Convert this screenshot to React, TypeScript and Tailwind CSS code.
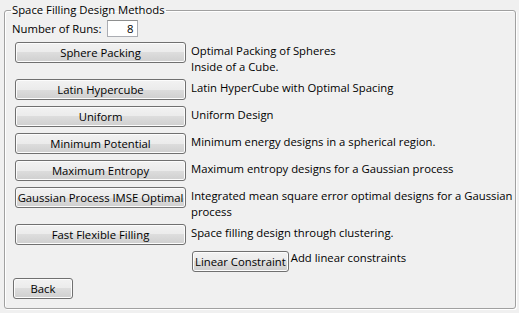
import React from "react";

const btn =
  "flex items-center justify-center rounded-[3px] border border-[#707070] text-black shadow-[inset_0_0_0_1px_#fcfcfc] bg-[linear-gradient(to_bottom,#f2f2f2_0%,#ebebeb_50%,#dddddd_50%,#cfcfcf_100%)] whitespace-nowrap leading-[14px]";

function Row({ label, desc }: { label: string; desc: React.ReactNode }) {
  return (
    <div className="flex items-start h-auto">
      <button className={`${btn} w-[171px] h-[21px] ml-[10px] shrink-0`}>{label}</button>
      <div className="ml-[5px] mt-[1px] mb-[-2px] leading-[16px] whitespace-nowrap">{desc}</div>
    </div>
  );
}

export default function App() {
  return (
    <div
      className="w-[519px] h-[313px] bg-[#f0f0f0] pt-[3px] pl-[4px] text-[11.3px] text-black overflow-hidden"
      style={{ fontFamily: '"Open Sans", "Noto Sans", sans-serif' }}
    >
      <fieldset className="w-[512px] h-[306px] rounded-[3px] border border-[#a0a0a0] shadow-[inset_1px_1px_0_#ffffff,1px_1px_0_#ffffff] p-0 m-0 min-w-0">
        <legend className="ml-[6px] px-[1px] leading-[14px]">Space Filling Design Methods</legend>
        <div className="flex flex-col">
          <div className="flex items-center mt-[3px] ml-[7px] h-[17px]">
            <span className="leading-[14px]">Number of Runs:</span>
            <div className="ml-[6px] w-[31px] h-[17px] border border-[#abadb3] border-t-[#8e8f8f] bg-white flex items-center justify-end pr-[4px] leading-[14px]">
              8
            </div>
          </div>
          <div className="flex flex-col gap-[6px] mt-[5px]">
            <Row
              label="Sphere Packing"
              desc={
                <>
                  Optimal Packing of Spheres
                  <br />
                  Inside of a Cube.
                </>
              }
            />
            <Row label="Latin Hypercube" desc="Latin HyperCube with Optimal Spacing" />
            <Row label="Uniform" desc="Uniform Design" />
            <Row label="Minimum Potential" desc="Minimum energy designs in a spherical region." />
            <Row label="Maximum Entropy" desc="Maximum entropy designs for a Gaussian process" />
            <Row
              label="Gaussian Process IMSE Optimal"
              desc={
                <>
                  Integrated mean square error optimal designs for a Gaussian
                  <br />
                  process
                </>
              }
            />
            <Row label="Fast Flexible Filling" desc="Space filling design through clustering." />
            <div className="flex items-start">
              <button className={`${btn} h-[21px] ml-[187px] px-[2px]`}>Linear Constraint</button>
              <div className="ml-[2px] mt-[-1px] leading-[16px] whitespace-nowrap">Add linear constraints</div>
            </div>
            <div className="flex">
              <button className={`${btn} w-[60px] h-[21px] ml-[8px]`}>Back</button>
            </div>
          </div>
        </div>
      </fieldset>
    </div>
  );
}
